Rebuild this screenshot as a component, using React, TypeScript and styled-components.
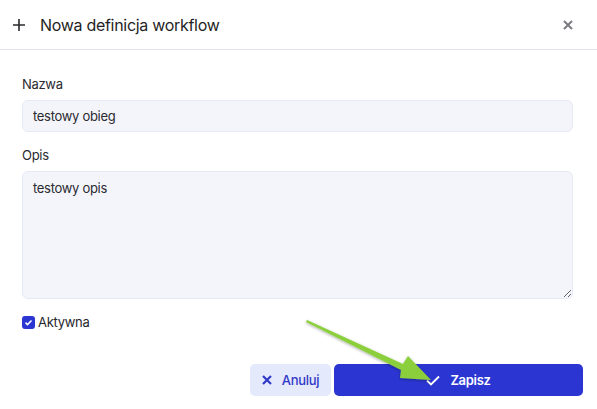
import React, { FC } from 'react';
import styled, { createGlobalStyle } from 'styled-components';

const GlobalStyle = createGlobalStyle`
  html, body {
    margin: 0;
    padding: 0;
    background: #ffffff;
    font-family: Inter, "Liberation Sans", sans-serif;
    letter-spacing: -0.3px;
    color: #222228;
  }
`;

const StyledDialog = styled.div`
  position: relative;
  width: 597px;
  height: 409px;
  background: #fff;
  overflow: hidden;
`;

const StyledHeader = styled.div`
  display: flex;
  align-items: center;
  height: 49px;
  padding: 0 24px 0 12px;
  border-bottom: 1px solid #e2e2ea;
`;

const StyledTitle = styled.h2`
  flex: 1;
  margin: 0 0 0 14px;
  font-size: 16px;
  font-weight: 400;
  color: #1f1f24;
`;

const StyledClose = styled.button`
  display: flex;
  padding: 0;
  border: 0;
  background: none;
  cursor: pointer;
`;

const StyledBody = styled.div`
  display: flex;
  flex-direction: column;
  padding: 24px 24px 0 22px;
`;

const StyledLabel = styled.label`
  display: block;
  font-size: 13px;
  line-height: 20px;
  color: #2a2a30;
  margin-bottom: 6px;
`;

const StyledField = styled.div`
  margin-bottom: 13px;
`;

const StyledInput = styled.input`
  box-sizing: border-box;
  width: 100%;
  height: 32px;
  padding: 0 10px;
  border: 1px solid #e6e9f6;
  border-radius: 6px;
  background: #f4f5fa;
  font-family: inherit;
  letter-spacing: inherit;
  font-size: 13px;
  color: #2a2a30;
  outline: none;
`;

const StyledTextarea = styled.textarea`
  box-sizing: border-box;
  display: block;
  width: 100%;
  height: 128px;
  padding: 8px 10px;
  border: 1px solid #e6e9f6;
  border-radius: 6px;
  background: #f4f5fa;
  font-family: inherit;
  letter-spacing: inherit;
  font-size: 13px;
  color: #2a2a30;
  outline: none;
`;

const StyledCheckRow = styled.label`
  display: flex;
  align-items: center;
  gap: 3px;
  font-size: 13px;
  line-height: 20px;
  color: #26262c;
`;

const StyledCheckBox = styled.span`
  display: flex;
  align-items: center;
  justify-content: center;
  width: 13px;
  height: 13px;
  border-radius: 3px;
  background: #2b36d2;
`;

const StyledFooter = styled.div`
  display: flex;
  justify-content: flex-end;
  gap: 3px;
  padding: 32px 14px 0 0;
`;

const StyledButton = styled.button<{ $primary?: boolean; $width: number }>`
  display: flex;
  align-items: center;
  justify-content: center;
  gap: 10px;
  width: ${p => p.$width}px;
  height: 32px;
  border: 0;
  border-radius: 5px;
  font-family: inherit;
  letter-spacing: inherit;
  font-size: 13px;
  font-weight: ${p => (p.$primary ? 600 : 500)};
  background: ${p => (p.$primary ? '#2b36d2' : '#e5e9fc')};
  color: ${p => (p.$primary ? '#ffffff' : '#3038c8')};
  cursor: pointer;
`;

const StyledArrow = styled.svg`
  position: absolute;
  left: 0;
  top: 0;
  pointer-events: none;
`;

const App: FC = () => {
  return (
    <StyledDialog>
      <GlobalStyle />
      <StyledHeader>
        <svg width="14" height="14" viewBox="0 0 14 14">
          <path d="M7 1v12M1 7h12" stroke="#2a2a2e" strokeWidth="1.6" />
        </svg>
        <StyledTitle>Nowa definicja workflow</StyledTitle>
        <StyledClose>
          <svg width="10" height="10" viewBox="0 0 10 10">
            <path d="M1 1l8 8M9 1l-8 8" stroke="#7a7a80" strokeWidth="2" />
          </svg>
        </StyledClose>
      </StyledHeader>
      <StyledBody>
        <StyledField>
          <StyledLabel>Nazwa</StyledLabel>
          <StyledInput defaultValue="testowy obieg" />
        </StyledField>
        <StyledField>
          <StyledLabel>Opis</StyledLabel>
          <StyledTextarea defaultValue="testowy opis" />
        </StyledField>
        <StyledCheckRow>
          <StyledCheckBox>
            <svg width="9" height="9" viewBox="0 0 9 9">
              <path d="M1.5 4.6l2 2 4-4.2" stroke="#fff" strokeWidth="1.5" fill="none" />
            </svg>
          </StyledCheckBox>
          Aktywna
        </StyledCheckRow>
      </StyledBody>
      <StyledFooter>
        <StyledButton $width={81}>
          <svg width="10" height="10" viewBox="0 0 10 10">
            <path d="M1 1l8 8M9 1l-8 8" stroke="#3038c8" strokeWidth="2.2" />
          </svg>
          Anuluj
        </StyledButton>
        <StyledButton $primary $width={249}>
          <svg width="14" height="11" viewBox="0 0 14 11">
            <path d="M1 5.5l4 4 8-8" stroke="#fff" strokeWidth="1.8" fill="none" />
          </svg>
          Zapisz
        </StyledButton>
      </StyledFooter>
      <StyledArrow width="597" height="409" viewBox="0 0 597 409">
        <defs>
          <filter id="shadow" x="-20%" y="-20%" width="140%" height="140%">
            <feDropShadow dx="0" dy="1" stdDeviation="1.5" floodColor="#000" floodOpacity="0.35" />
          </filter>
        </defs>
        <path
          d="M307 320 L403 364 L408 356 L431 380 L400 378 L401 370 L306 322 Z"
          fill="#8ccf3d"
          filter="url(#shadow)"
        />
      </StyledArrow>
    </StyledDialog>
  );
};

export default App;
